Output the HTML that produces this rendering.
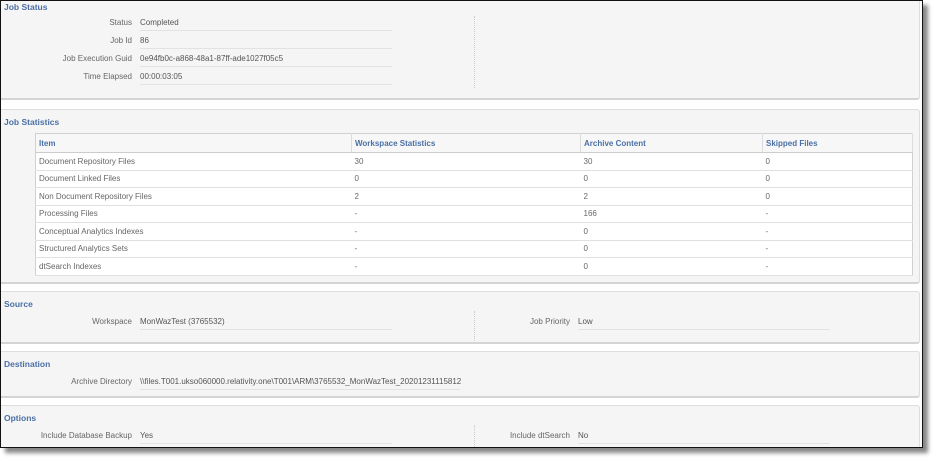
<!DOCTYPE html>
<html><head><meta charset="utf-8"><style>
*{margin:0;padding:0;box-sizing:border-box}
body{width:938px;height:462px;background:#fff;position:relative;overflow:hidden;font-family:"Liberation Sans",sans-serif;font-size:8px;color:#555}
.frame{position:absolute;left:0;top:0;width:923px;height:448px;border:1.5px solid #111;background:#fff;box-shadow:5px 5px 4px #888;overflow:hidden}
.p{position:absolute;left:-2px;width:921px;background:#f5f5f5;border:1px solid #ddd;border-bottom:2px solid #d4d4d4;border-radius:0 3px 3px 0}
.h{position:absolute;left:4px;color:#4a6fa5;font-weight:bold;font-size:8.5px}
.l{position:absolute;text-align:right;color:#666}
.v{position:absolute;color:#555;border-bottom:1px solid #e2e2e2;padding-bottom:3px}
table{position:absolute;left:34px;top:132px;width:878px;border-collapse:collapse;background:#fff;border:1px solid #d0d0d0}
td,th{text-align:left;padding:0 3px;height:17.5px;border-bottom:1px solid #e0e0e0;font-weight:normal;color:#666}
th{background:#f7f7f7;color:#4a6fa5;font-weight:bold;height:19px;border-right:1px solid #ddd;border-bottom:1px solid #ccc}
</style></head><body>
<div class="frame">
<div class="p" style="top:-2px;height:101px">
 <div class="h" style="top:2px">Job Status</div>
 <div class="l" style="left:0;width:132px;top:18px">Status</div><div class="v" style="left:140px;top:18px;width:252px">Completed</div>
 <div class="l" style="left:0;width:132px;top:36px">Job Id</div><div class="v" style="left:140px;top:36px;width:252px">86</div>
 <div class="l" style="left:0;width:132px;top:54px">Job Execution Guid</div><div class="v" style="left:140px;top:54px;width:252px">0e94fb0c-a868-48a1-87ff-ade1027f05c5</div>
 <div class="l" style="left:0;width:132px;top:72px">Time Elapsed</div><div class="v" style="left:140px;top:72px;width:252px">00:00:03:05</div>
 <div style="position:absolute;left:474px;top:16px;height:72px;border-left:1px dotted #ccc"></div>
</div>
<div class="p" style="top:108px;height:175px">
 <div class="h" style="top:7px">Job Statistics</div>
</div>
<table>
<tr><th style="width:316px">Item</th><th style="width:229px">Workspace Statistics</th><th style="width:182px">Archive Content</th><th>Skipped Files</th></tr>
<tr><td>Document Repository Files</td><td>30</td><td>30</td><td>0</td></tr>
<tr><td>Document Linked Files</td><td>0</td><td>0</td><td>0</td></tr>
<tr><td>Non Document Repository Files</td><td>2</td><td>2</td><td>0</td></tr>
<tr><td>Processing Files</td><td>-</td><td>166</td><td>-</td></tr>
<tr><td>Conceptual Analytics Indexes</td><td>-</td><td>0</td><td>-</td></tr>
<tr><td>Structured Analytics Sets</td><td>-</td><td>0</td><td>-</td></tr>
<tr><td>dtSearch Indexes</td><td>-</td><td>0</td><td>-</td></tr>
</table>
<div class="p" style="top:290px;height:53px">
 <div class="h" style="top:7px">Source</div>
 <div class="l" style="left:0;width:132px;top:25px">Workspace</div><div class="v" style="left:140px;top:25px;width:252px">MonWazTest (3765532)</div>
 <div style="position:absolute;left:474px;top:19px;height:30px;border-left:1px dotted #ccc"></div>
 <div class="l" style="left:480px;width:90px;top:25px">Job Priority</div><div class="v" style="left:578px;top:25px;width:252px">Low</div>
</div>
<div class="p" style="top:350px;height:47px">
 <div class="h" style="top:7px">Destination</div>
 <div class="l" style="left:0;width:132px;top:25px">Archive Directory</div><div class="v" style="left:140px;top:25px;width:320px">\\files.T001.ukso060000.relativity.one\T001\ARM\3765532_MonWazTest_20201231115812</div>
</div>
<div class="p" style="top:404px;height:60px">
 <div class="h" style="top:7px">Options</div>
 <div class="l" style="left:0;width:132px;top:25px">Include Database Backup</div><div class="v" style="left:140px;top:25px;width:252px">Yes</div>
 <div style="position:absolute;left:474px;top:19px;height:30px;border-left:1px dotted #ccc"></div>
 <div class="l" style="left:480px;width:90px;top:25px">Include dtSearch</div><div class="v" style="left:578px;top:25px;width:252px">No</div>
</div>
</div>
</body></html>
